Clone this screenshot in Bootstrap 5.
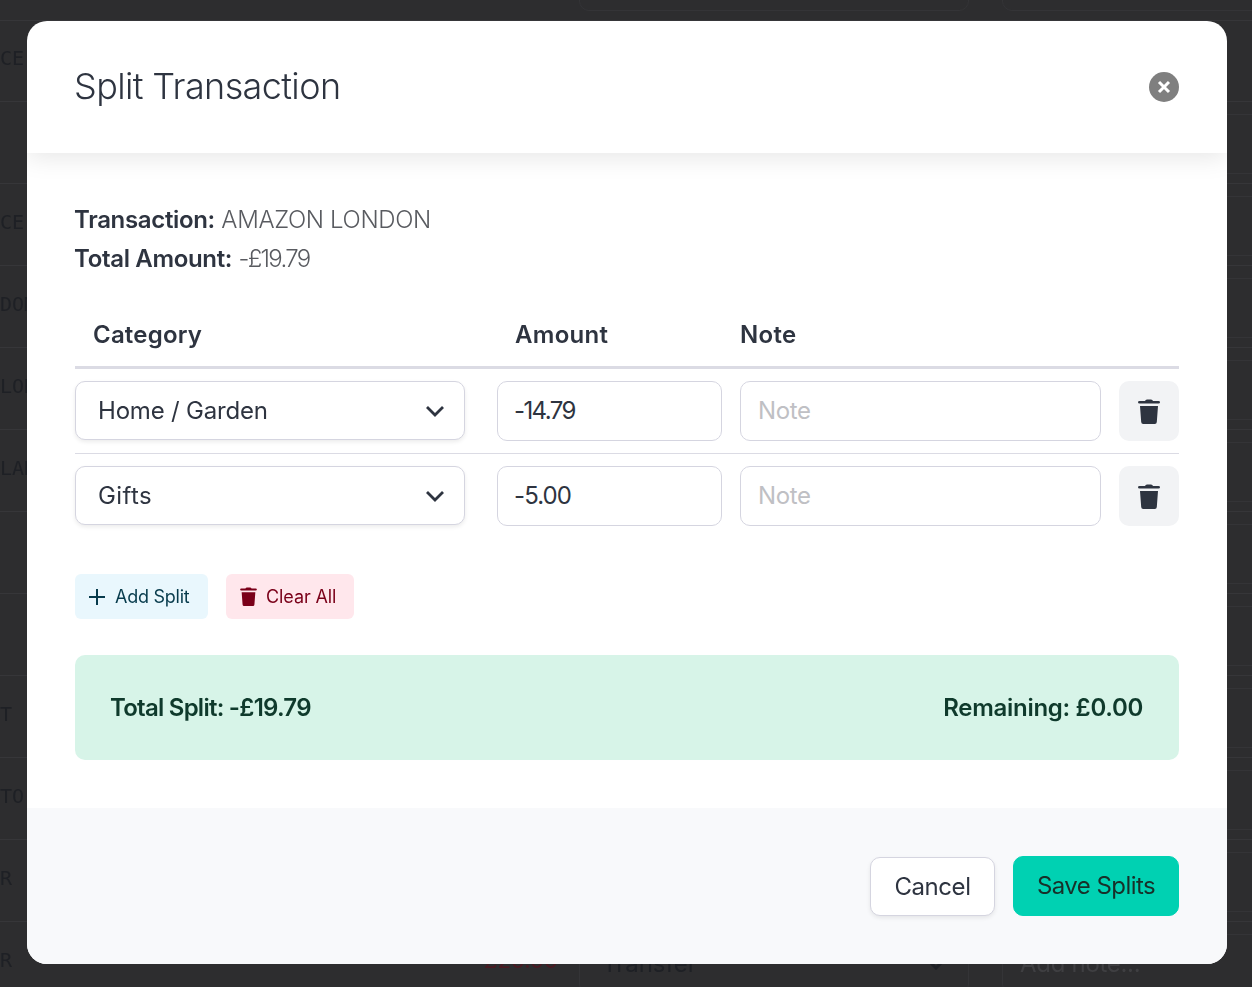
<!doctype html>
<html lang="en"><head><meta charset="utf-8">
<link href="https://cdn.jsdelivr.net/npm/bootstrap@5.3.0/dist/css/bootstrap.min.css" rel="stylesheet">
<style>
html,body{height:100%;overflow:hidden}
body{background:#2d2d2f;font-family:"Inter","Liberation Sans",sans-serif;color:#2e3440}
.under{position:fixed;inset:0;padding-top:21px;color:#1e2025;font-family:"DejaVu Sans Mono",monospace;font-size:20px;overflow:hidden}
.under-row{height:82px;border-bottom:1px solid #363639;display:flex;align-items:center;position:relative;padding-bottom:6px}
.under-row:first-child{border-top:1px solid #363639;margin-top:-1px}
.ubox{position:absolute;top:12px;height:60px;border:1px solid #343437;border-radius:10px;display:flex;align-items:center;justify-content:space-between;padding:0 22px;font-family:"Inter",sans-serif;font-size:24px}
.ubox-s{left:579px;width:390px}.ubox-n{left:1002px;width:361px;color:#3f3f42;padding:0 17px;letter-spacing:-.3px}
.uamt{position:absolute;left:474px;top:22px;font-family:"Inter",sans-serif;font-size:22px;color:#4a1a22}
.dlg{position:fixed;left:27px;top:21px;width:1200px;height:943px;background:#fff;border-radius:20px;overflow:hidden;display:flex;flex-direction:column}
.dlg-head{height:132px;padding:0 48px 0 47px;box-shadow:0 4px 24px rgba(0,0,0,.1);position:relative;display:flex;align-items:center;justify-content:space-between}
.dlg-title{font-size:36px;line-height:1.2;margin:0;font-weight:300;letter-spacing:-.62px;color:#2e3440}
.x-btn{width:30px;height:30px;border-radius:50%;background:#7f7f7f;border:0;padding:0;display:flex;align-items:center;justify-content:center}
.dlg-body{flex:1;padding:47px 48px 0}
.meta{font-size:24px;line-height:39px;color:#595b60;font-weight:300;letter-spacing:-.36px;margin-left:-1px}
.meta b{color:#2e3440;font-weight:600;letter-spacing:-.33px}
.digits{letter-spacing:-1.7px}
.cols{display:flex;gap:18px;border-bottom:3px solid #dbdbe4;height:91px;align-items:center;font-size:24px;font-weight:600;letter-spacing:.3px;padding-top:25px}
.c1{width:390px;padding-left:18px;letter-spacing:.2px}.c2{width:225px;margin-left:14px;padding-left:18px}.c3{width:361px}.c4{width:60px}
.split-row{display:flex;gap:18px;padding:12px 0}
.split-row+.split-row{border-top:1px solid #dbdbe4}
.fld{height:60px;border:1px solid #d5d5e0;border-radius:10px;background:#fff;font-size:24px;padding:0 17px;color:#2e3440;display:flex;align-items:center;letter-spacing:-.2px;font-weight:400}
.sel{width:390px;height:59px;padding:0 19px 0 22px;justify-content:space-between;box-shadow:0 2px 4px rgba(0,0,0,.08);margin-right:14px}
.gift{letter-spacing:.4px}
.amt{width:225px;letter-spacing:-1.6px;padding-left:16px}.amt2{letter-spacing:-.9px}.nt{width:361px;color:#bfc0c4;letter-spacing:-.4px}
.del{width:60px;height:60px;border:0;border-radius:10px;background:#f2f3f5;display:flex;align-items:center;justify-content:center;padding:0}
.tools{display:flex;gap:18px;margin-top:36px}
.tbtn{height:45px;border:0;border-radius:6px;font-size:18px;padding:0 0 0 14px;display:flex;align-items:center;gap:10px;letter-spacing:-.25px;white-space:nowrap}
.add{background:#e9f7fd;color:#073b4c;width:133px}.clr{background:#ffe7ec;color:#7a0019;width:128px;letter-spacing:-.1px;gap:9px}
.sum{margin-top:36px;height:105px;background:#d7f4e8;border-radius:10px;padding:0 36px 0 35px;display:flex;align-items:center;justify-content:space-between;font-size:24px;font-weight:600;color:#0f3a2c;letter-spacing:-.75px}
.rem{letter-spacing:-.3px}
.dlg-foot{height:156px;background:#f8f9fb;padding:48px;display:flex;justify-content:flex-end;align-items:flex-start;gap:18px}
.fbtn{height:60px;border-radius:10px;font-size:24px;padding:0;border:1px solid #d5d5e0;background:#fff;color:#2e3440;letter-spacing:-.45px}
.fcancel{width:125px;height:59px;margin-top:1px;box-shadow:0 2px 4px rgba(0,0,0,.08)}
.fsave{width:166px;background:#00d1b2;border-color:#00d1b2;color:#173029;letter-spacing:-.55px}
</style></head><body>
<div class="under">
<div class="under-row"><span class="ubox ubox-s" style="top:-70px"></span><span class="ubox ubox-n" style="top:-70px"></span>CE</div><div class="under-row"><span class="ubox ubox-n"></span></div><div class="under-row"><span class="ubox ubox-n"></span>CE</div><div class="under-row"><span class="ubox ubox-n"></span>DOM</div><div class="under-row"><span class="ubox ubox-n"></span>LON</div><div class="under-row"><span class="ubox ubox-n"></span>LAN</div><div class="under-row"><span class="ubox ubox-n"></span></div><div class="under-row"><span class="ubox ubox-n"></span></div><div class="under-row"><span class="ubox ubox-n"></span>T</div><div class="under-row"><span class="ubox ubox-n"></span>TO</div><div class="under-row"><span class="ubox ubox-n"></span>R</div><div class="under-row"><span class="uamt">-£20.00</span><span class="ubox ubox-s">Transfer<svg width="20" height="12" viewBox="0 0 20 12"><path d="M2 2l8 8 8-8" fill="none" stroke="#1e2025" stroke-width="3"/></svg></span><span class="ubox ubox-n">Add note...</span>R</div>
</div>
<div class="dlg" role="dialog">
<div class="dlg-head"><h5 class="dlg-title">Split Transaction</h5>
<button class="x-btn" aria-label="Close"><svg width="14" height="14" viewBox="0 0 14 14"><path d="M2 2l10 10M12 2L2 12" stroke="#fff" stroke-width="3"/></svg></button></div>
<div class="dlg-body">
<div class="meta"><b>Transaction:</b> AMAZON LONDON</div>
<div class="meta"><b>Total Amount:</b> <span class="digits">-£19.79</span></div>
<div class="cols"><div class="c1">Category</div><div class="c2">Amount</div><div class="c3">Note</div><div class="c4"></div></div>
<div class="split-row"><div class="fld sel">Home / Garden<svg width="20" height="12" viewBox="0 0 20 12"><path d="M2 2l8 8 8-8" fill="none" stroke="#2e3440" stroke-width="2.8"/></svg></div><div class="fld amt">-14.79</div><div class="fld nt">Note</div><button class="del" aria-label="Delete"><svg width="22" height="25" viewBox="0 0 22 25"><path fill="#2e3440" d="M7 2Q7.5.5 9 .5h4q1.500 0 2 1.500h5.500q1.500 0 1.500 1.250T20.500 4.500H1.500Q0 4.500 0 3.250T1.500 2ZM2 7H20L18.800 23q-.1 2-2 2H5.200q-1.900 0-2-2Z"/></svg></button></div>
<div class="split-row"><div class="fld sel gift">Gifts<svg width="20" height="12" viewBox="0 0 20 12"><path d="M2 2l8 8 8-8" fill="none" stroke="#2e3440" stroke-width="2.8"/></svg></div><div class="fld amt amt2">-5.00</div><div class="fld nt">Note</div><button class="del" aria-label="Delete"><svg width="22" height="25" viewBox="0 0 22 25"><path fill="#2e3440" d="M7 2Q7.5.5 9 .5h4q1.500 0 2 1.500h5.500q1.500 0 1.500 1.250T20.500 4.500H1.500Q0 4.500 0 3.250T1.500 2ZM2 7H20L18.800 23q-.1 2-2 2H5.200q-1.900 0-2-2Z"/></svg></button></div>
<div class="tools"><button class="tbtn add"><svg width="16" height="16" viewBox="0 0 16 16"><path d="M8 0v16M0 8h16" stroke="#073b4c" stroke-width="2"/></svg>Add Split</button><button class="tbtn clr"><svg width="17" height="19" viewBox="0 0 22 25"><path fill="#7a0019" d="M7 2Q7.5.5 9 .5h4q1.500 0 2 1.500h5.500q1.500 0 1.500 1.250T20.500 4.500H1.500Q0 4.500 0 3.250T1.500 2ZM2 7H20L18.800 23q-.1 2-2 2H5.200q-1.900 0-2-2Z"/></svg>Clear All</button></div>
<div class="sum"><span>Total Split: -£19.79</span><span class="rem">Remaining: £0.00</span></div>
</div>
<div class="dlg-foot"><button class="fbtn fcancel">Cancel</button><button class="fbtn fsave">Save Splits</button></div>
</div>
</body></html>
